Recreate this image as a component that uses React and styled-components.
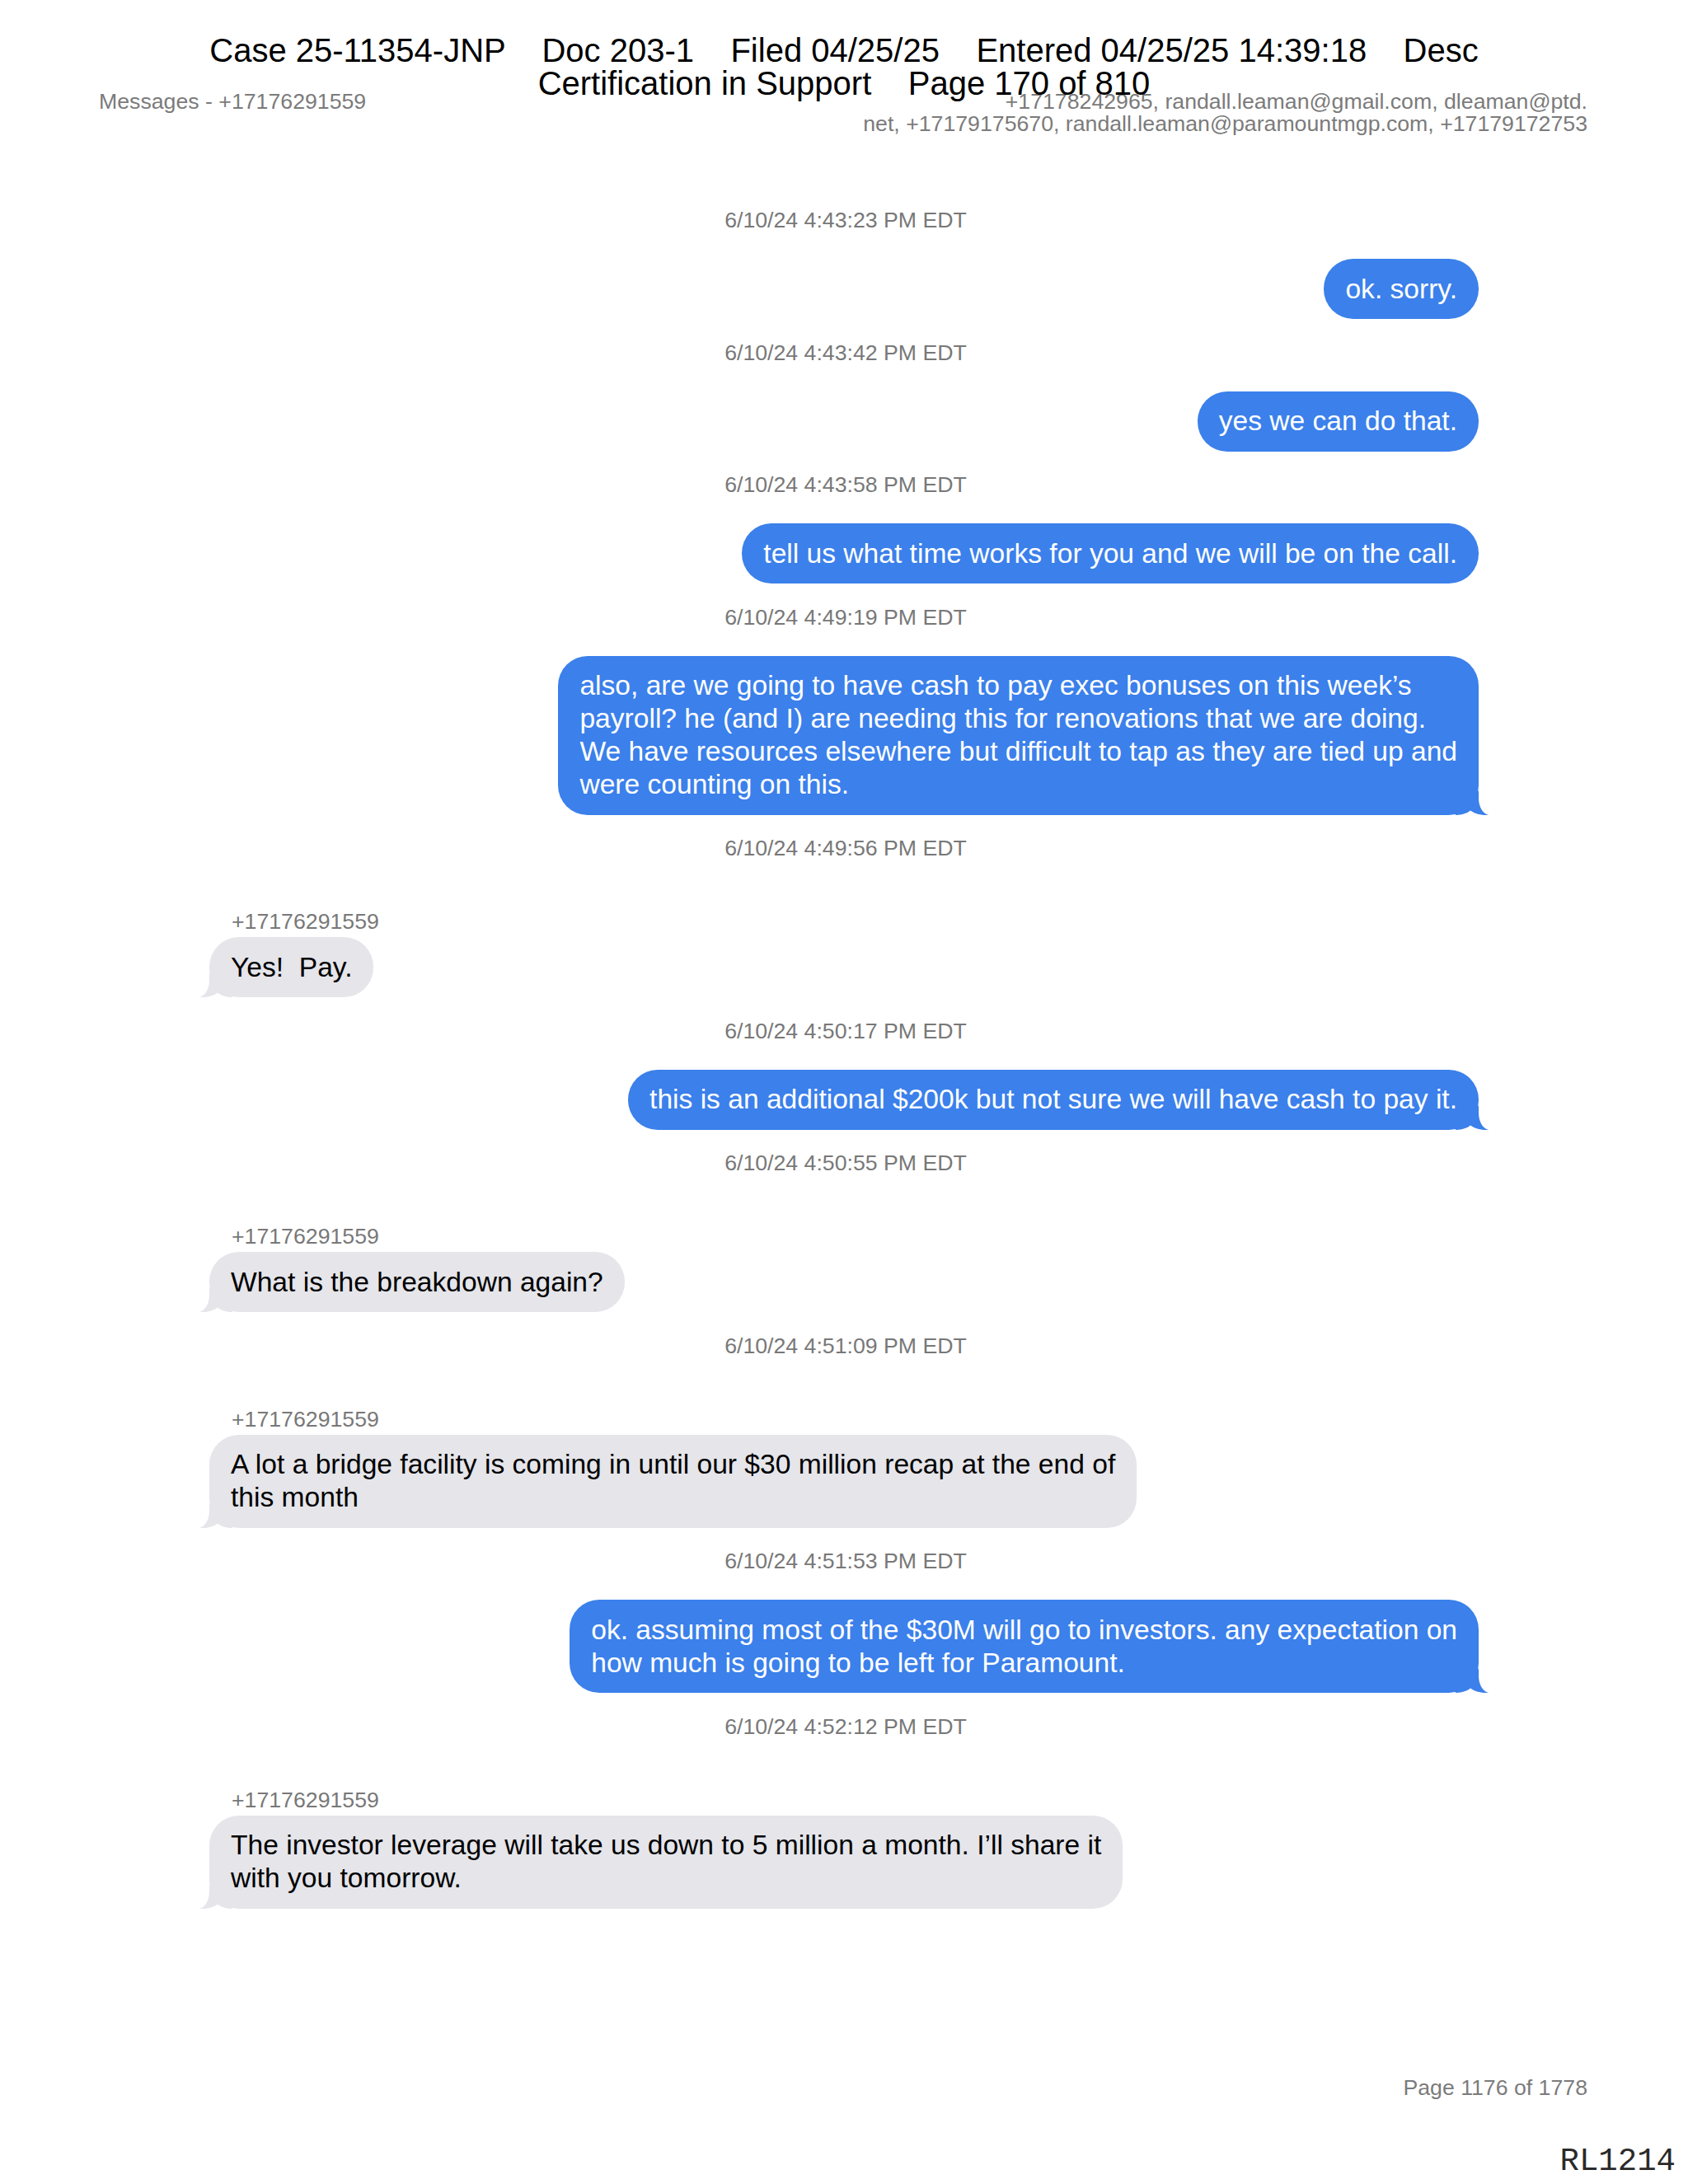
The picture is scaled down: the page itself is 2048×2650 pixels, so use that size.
import React from 'react'
import styled, {createGlobalStyle} from 'styled-components'

const GlobalStyle = createGlobalStyle`
  html, body {
    margin: 0;
    padding: 0;
    background: #fff;
  }
  body {
    font-family: "Liberation Sans", Arial, Helvetica, sans-serif;
  }
`

const SENDER = '+17176291559'

const messages = [
  {ts: '6/10/24 4:43:23 PM EDT', mine: true, lines: ['ok. sorry.']},
  {ts: '6/10/24 4:43:42 PM EDT', mine: true, lines: ['yes we can do that.']},
  {ts: '6/10/24 4:43:58 PM EDT', mine: true, lines: ['tell us what time works for you and we will be on the call.']},
  {
    ts: '6/10/24 4:49:19 PM EDT',
    mine: true,
    tail: true,
    lines: [
      'also, are we going to have cash to pay exec bonuses on this week’s',
      'payroll? he (and I) are needing this for renovations that we are doing.',
      'We have resources elsewhere but difficult to tap as they are tied up and',
      'were counting on this.',
    ],
  },
  {ts: '6/10/24 4:49:56 PM EDT', tail: true, lines: ['Yes!  Pay.']},
  {ts: '6/10/24 4:50:17 PM EDT', mine: true, tail: true, lines: ['this is an additional $200k but not sure we will have cash to pay it.']},
  {ts: '6/10/24 4:50:55 PM EDT', tail: true, lines: ['What is the breakdown again?']},
  {
    ts: '6/10/24 4:51:09 PM EDT',
    tail: true,
    lines: ['A lot a bridge facility is coming in until our $30 million recap at the end of', 'this month'],
  },
  {
    ts: '6/10/24 4:51:53 PM EDT',
    mine: true,
    tail: true,
    lines: ['ok. assuming most of the $30M will go to investors. any expectation on', 'how much is going to be left for Paramount.'],
  },
  {
    ts: '6/10/24 4:52:12 PM EDT',
    tail: true,
    lines: ['The investor leverage will take us down to 5 million a month. I’ll share it', 'with you tomorrow.'],
  },
]

// bubble tail, drawn for the right side and mirrored for incoming messages
const Tail = ({mine}) => (
  <TailSvg $mine={mine} viewBox="0 0 40 30" width="40" height="30">
    <path d="M0 0 H28 V8 C28 19 33 27 40 29 C33 29.6 24 28 18 23.5 C13 27.5 7 29 0 29 Z" />
  </TailSvg>
)

const App = () => {
  return (
    <Page>
      <GlobalStyle />
      <Stamp>
        {'Case 25-11354-JNP    Doc 203-1    Filed 04/25/25    Entered 04/25/25 14:39:18    Desc'}
        <br />
        {'Certification in Support    Page 170 of 810'}
      </Stamp>

      <TopBar>
        <Title>Messages - +17176291559</Title>
        <Participants>
          +17178242965, randall.leaman@gmail.com, dleaman@ptd.
          <br />
          net, +17179175670, randall.leaman@paramountmgp.com, +17179172753
        </Participants>
      </TopBar>

      <Thread>
        {messages.map((m, i) => (
          <Entry key={i}>
            <Timestamp>{m.ts}</Timestamp>
            {!m.mine && <Sender>{SENDER}</Sender>}
            <Row $mine={m.mine}>
              <Bubble $mine={m.mine}>
                {m.lines.map((line, j) => (
                  <Line key={j}>{line}</Line>
                ))}
                {m.tail && <Tail mine={m.mine} />}
              </Bubble>
            </Row>
          </Entry>
        ))}
      </Thread>

      <Footer>
        <PageNo>Page 1176 of 1778</PageNo>
        <Bates>RL1214</Bates>
      </Footer>
    </Page>
  )
}

const Page = styled.div`
  position: relative;
  width: 2048px;
  height: 2650px;
  display: flex;
  flex-direction: column;
  overflow: hidden;
  background: #fff;
`

const Stamp = styled.div`
  position: absolute;
  top: 41px;
  left: 0;
  right: 0;
  text-align: center;
  white-space: pre;
  font-size: 40px;
  line-height: 40px;
  color: #000;
  z-index: 2;
`

const TopBar = styled.header`
  display: flex;
  justify-content: space-between;
  align-items: flex-start;
  padding: 110px 122px 0 120px;
  font-size: 26.7px;
  line-height: 27px;
  color: #7b7b7b;
`

const Title = styled.div`
  white-space: nowrap;
`

const Participants = styled.div`
  text-align: right;
  white-space: nowrap;
`

const Thread = styled.main`
  width: 1540px;
  margin: 0 auto;
  padding-top: 87px;
  display: flex;
  flex-direction: column;
`

const Entry = styled.section`
  display: flex;
  flex-direction: column;
  & + & {
    margin-top: 24.5px;
  }
`

const Timestamp = styled.div`
  text-align: center;
  font-size: 26.7px;
  line-height: 32px;
  color: #787878;
  padding-left: 4px;
  margin-bottom: 31px;
`

const Sender = styled.div`
  font-size: 26.7px;
  line-height: 32px;
  color: #787878;
  padding-left: 27px;
  margin-top: 26px;
  margin-bottom: 3px;
`

const Row = styled.div`
  display: flex;
  justify-content: ${(p) => (p.$mine ? 'flex-end' : 'flex-start')};
`

const Bubble = styled.div`
  position: relative;
  padding: 16.5px 26px;
  border-radius: 36px;
  background: ${(p) => (p.$mine ? '#3b80eb' : '#e5e5ea')};
  color: ${(p) => (p.$mine ? '#fff' : '#000')};
  fill: ${(p) => (p.$mine ? '#3b80eb' : '#e5e5ea')};
  font-size: 33.6px;
  line-height: 40px;
`

const Line = styled.div`
  white-space: pre;
`

const TailSvg = styled.svg`
  position: absolute;
  bottom: -1px;
  ${(p) => (p.$mine ? 'right: -12px;' : 'left: -12px; transform: scaleX(-1);')}
  display: block;
`

const Footer = styled.footer`
  margin-top: auto;
  display: flex;
  flex-direction: column;
  align-items: flex-end;
  padding: 0 15px 7px 0;
`

const PageNo = styled.div`
  font-size: 26.7px;
  line-height: 27px;
  color: #7b7b7b;
  margin-right: 107px;
  margin-bottom: 56px;
`

const Bates = styled.div`
  font-family: "Liberation Mono", "Courier New", monospace;
  font-size: 39px;
  line-height: 40px;
  color: #2a2a2a;
`

export default App
